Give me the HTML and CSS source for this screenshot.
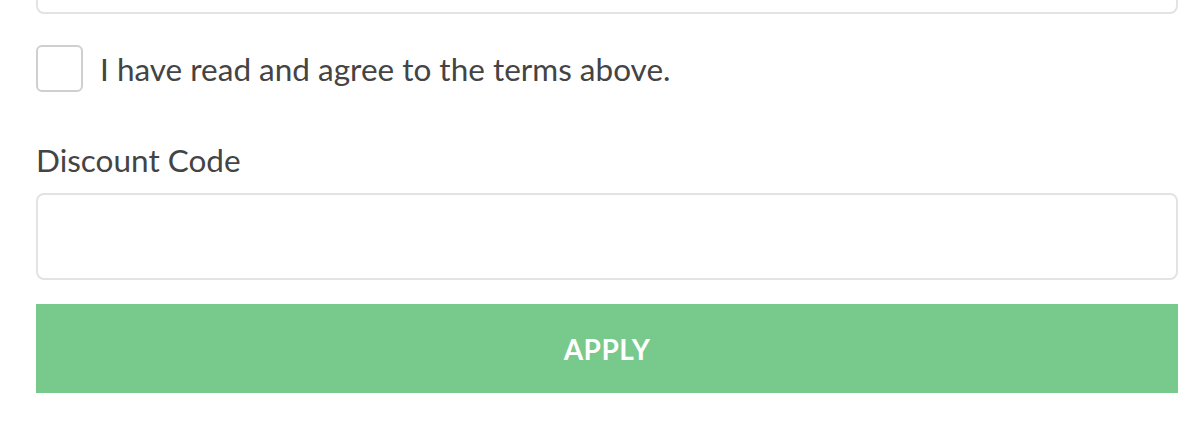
FILE: index.html
```html
<!DOCTYPE html>
<html>

<head>
  <meta charset="UTF-8">
  <title>Checkout</title>
  <link rel="stylesheet" href="styles.css">
</head>

<body>
  <div class="form">
    <div class="terms-box"></div>

    <label class="agree">
      <span class="check"></span>
      <span class="agree-text">I have read and agree to the terms above.</span>
    </label>

    <div class="field">
      <div class="field-label">Discount Code</div>
      <input class="field-input" type="text">
    </div>

    <button class="apply">APPLY</button>
  </div>
</body>

</html>
```

FILE: styles.css
```css
body {
  margin: 0;
  background: #fff;
  font-family: Lato, "Liberation Sans", sans-serif;
  color: #444;
  overflow: hidden;
}

.form {
  display: flex;
  flex-direction: column;
  padding: 0 17px 0 36px;
}

.terms-box {
  height: 60px;
  margin-top: -50px;
  border: 2px solid #e3e3e3;
  border-radius: 8px;
}

.agree {
  display: flex;
  align-items: center;
  margin-top: 31px;
}

.check {
  width: 43px;
  height: 43px;
  border: 2px solid #cfcfcf;
  border-radius: 6px;
  flex-shrink: 0;
}

.agree-text {
  margin-left: 17px;
  font-size: 31.5px;
}

.field {
  display: flex;
  flex-direction: column;
  margin-top: 50px;
}

.field-label {
  font-size: 31.5px;
  line-height: 36px;
}

.field-input {
  box-sizing: border-box;
  height: 87px;
  margin-top: 15px;
  border: 2px solid #e3e3e3;
  border-radius: 8px;
  font: inherit;
}

.apply {
  height: 89px;
  margin-top: 24px;
  border: none;
  background: #78c98c;
  color: #fff;
  font-family: Lato, "Liberation Sans", sans-serif;
  font-weight: bold;
  font-size: 28px;
  letter-spacing: 0.5px;
}
```
